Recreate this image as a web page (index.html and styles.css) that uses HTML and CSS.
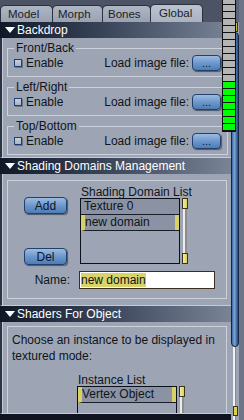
FILE: index.html
```html
<!DOCTYPE html>
<html lang="en">

<head>
    <meta charset="UTF-8">
    <meta name="viewport" content="width=device-width, initial-scale=1.0">
    <title>Global</title>
    <link rel="stylesheet" href="styles.css">
</head>

<body>
    <div class="app">
        <div class="main">
            <div class="tabs">
                <div class="tab model">Model</div>
                <div class="tab morph">Morph</div>
                <div class="tab bones">Bones</div>
                <div class="tab active">Global</div>
            </div>

            <div class="bar"><span class="tri"></span>Backdrop</div>
            <div class="panel backdrop">
                <fieldset class="group">
                    <legend>Front/Back</legend>
                    <div class="row">
                        <label class="check"><span class="box"></span>Enable</label>
                        <span class="load">Load image file:</span>
                        <button class="btn dots">...</button>
                    </div>
                </fieldset>
                <fieldset class="group">
                    <legend>Left/Right</legend>
                    <div class="row">
                        <label class="check"><span class="box"></span>Enable</label>
                        <span class="load">Load image file:</span>
                        <button class="btn dots">...</button>
                    </div>
                </fieldset>
                <fieldset class="group">
                    <legend>Top/Bottom</legend>
                    <div class="row">
                        <label class="check"><span class="box"></span>Enable</label>
                        <span class="load">Load image file:</span>
                        <button class="btn dots">...</button>
                    </div>
                </fieldset>
            </div>

            <div class="bar"><span class="tri"></span>Shading Domains Management</div>
            <div class="panel domains">
                <div class="frame">
                    <div class="domain-row">
                        <div class="actions">
                            <button class="btn big">Add</button>
                            <button class="btn big">Del</button>
                        </div>
                        <div class="list-col">
                            <div class="list-label">Shading Domain List</div>
                            <div class="list-wrap">
                                <div class="list tall">
                                    <div class="item">Texture 0</div>
                                    <div class="item sel">new domain</div>
                                </div>
                                <div class="mini-scroll tall">
                                    <span class="knob"></span>
                                    <span class="knob"></span>
                                </div>
                            </div>
                        </div>
                    </div>
                    <div class="name-row">
                        <span class="name-label">Name:</span>
                        <div class="name-input"><span class="hl">new domain</span></div>
                    </div>
                </div>
            </div>

            <div class="bar"><span class="tri"></span>Shaders For Object</div>
            <div class="panel shaders">
                <div class="frame">
                    <p class="hint">Choose an instance to be displayed in textured mode:</p>
                    <div class="list-col inst">
                        <div class="list-label">Instance List</div>
                        <div class="list-wrap">
                            <div class="list short">
                                <div class="item sel">Vertex Object</div>
                            </div>
                            <div class="mini-scroll short">
                                <span class="knob"></span>
                            </div>
                        </div>
                    </div>
                </div>
            </div>
            <div class="foot"></div>
        </div>

        <div class="vscroll">
            <div class="top-mark"></div>
            <div class="thumb"></div>
            <div class="track"><span class="end-mark"></span></div>
        </div>
        <div class="edge"></div>

        <div class="meter">
            <span></span><span></span><span></span><span></span><span></span><span></span>
            <span></span><span></span><span></span><span></span><span></span><span></span>
            <span class="on"></span><span class="on"></span><span class="on"></span><span class="on"></span>
            <span class="on"></span><span class="on"></span><span class="on"></span>
        </div>
    </div>
</body>

</html>
```

FILE: styles.css
```css
* {
    box-sizing: border-box;
}

body {
    margin: 0;
    background: #5c6577;
    font-family: "Liberation Sans", Arial, sans-serif;
    font-size: 12px;
    color: #101418;
}

.app {
    position: relative;
    display: flex;
    width: 244px;
    height: 420px;
    overflow: hidden;
}

.main {
    width: 231px;
    display: flex;
    flex-direction: column;
}

/* tabs */
.tabs {
    height: 22px;
    display: flex;
    align-items: flex-end;
    background: #4c5364;
}

.tab {
    height: 17px;
    margin-right: -1px;
    padding: 2px 0 0 5px;
    background: linear-gradient(#aeb5c3, #9aa2b2);
    border: 1px solid #2a3140;
    border-bottom: none;
    border-radius: 5px 5px 0 0;
    font-size: 11.5px;
    color: #1a1e26;
}

.tab.model {
    width: 53px;
    padding-left: 7px;
}

.tab.morph {
    width: 51px;
}

.tab.bones {
    width: 49px;
}

.tab.active {
    height: 18px;
    width: 53px;
    padding-left: 8px;
    background: linear-gradient(#bcc3cf, #aab2c0);
}

/* section title bars */
.bar {
    height: 16px;
    display: flex;
    align-items: center;
    padding-left: 5px;
    background: linear-gradient(to right, #101828, #3a4458 45%, #7a8497);
    color: #fff;
    font-size: 12px;
}

.tri {
    width: 0;
    height: 0;
    margin-right: 2px;
    border-left: 5px solid transparent;
    border-right: 5px solid transparent;
    border-top: 6px solid #fff;
}

.panel {
    background: #9da5b5;
    border-left: 2px solid #2c3444;
    border-bottom: 1px solid #c6ccd6;
    box-shadow: inset 1px 0 0 #c6ccd6;
}

/* backdrop */
.backdrop {
    padding: 4px 3px 2px 5px;
    display: flex;
    flex-direction: column;
    gap: 4px;
}

.group {
    margin: 0;
    height: 35px;
    padding: 0 6px;
    border: 1px solid #ccd2dc;
    min-width: 0;
}

.group legend {
    padding: 0 2px;
    line-height: 12px;
}

.row {
    display: flex;
    align-items: center;
    height: 18px;
}

.check {
    display: flex;
    align-items: center;
}

.box {
    width: 8px;
    height: 8px;
    margin-right: 4px;
    border: 1px solid #1f3f74;
    background: linear-gradient(#c6d0dc, #a9b5c6);
    box-shadow: 1px 1px 0 #6b7588;
}

.load {
    margin-left: auto;
    margin-right: 3px;
}

.btn {
    font-family: inherit;
    color: #0e1622;
    border: 1px solid #22406c;
    border-radius: 4px;
    background: linear-gradient(#9bbce2, #6e98cc 50%, #4e7cb6);
    box-shadow: 1px 1px 1px #4e5768;
    padding: 0;
}

.dots {
    width: 29px;
    height: 16px;
    font-size: 11px;
    line-height: 10px;
}

.big {
    width: 43px;
    height: 17px;
    font-size: 12px;
}

/* frames with light outline */
.frame {
    border: 1px solid #ccd2dc;
}

.domains {
    padding: 6px 4px 6px 5px;
}

.domain-row {
    display: flex;
    padding-top: 5px;
}

.actions {
    width: 72px;
    padding: 11px 0 0 16px;
    display: flex;
    flex-direction: column;
    gap: 34px;
}

.list-label {
    line-height: 12px;
    padding-left: 1px;
}

.list-wrap {
    display: flex;
    gap: 2px;
}

.list {
    width: 100px;
    border: 1px solid #0c1018;
    background: #9da5b5;
}

.list.tall {
    height: 66px;
}

.list.short {
    height: 30px;
}

.item {
    height: 16px;
    padding-left: 3px;
    line-height: 15px;
    background: #8a92a3;
    border-bottom: 1px solid #1a1e28;
}

.item.sel {
    border-left: 4px solid #d8d168;
    padding-left: 0;
    box-shadow: inset -4px 0 0 #d8d168;
}

.mini-scroll {
    width: 6px;
    display: flex;
    flex-direction: column;
    justify-content: space-between;
    background: linear-gradient(to right, #9da5b5 1px, #ececec 1px, #ececec 3px, #8c8c8c 3px, #8c8c8c 5px, #9da5b5 5px);
}

.mini-scroll.tall {
    height: 66px;
}

.mini-scroll.short {
    height: 30px;
    justify-content: flex-start;
}

.knob {
    height: 11px;
    width: 6px;
    border: 1px solid #3a3418;
    background: linear-gradient(to right, #f4eea0, #d8d060);
}

.name-row {
    display: flex;
    align-items: center;
    margin: 6px 0 9px;
}

.name-label {
    width: 62px;
    text-align: right;
    margin-right: 9px;
}

.name-input {
    width: 136px;
    height: 18px;
    border: 1px solid #3a2e1e;
    background: #fff;
    padding: 1px;
    line-height: 14px;
}

.hl {
    background: #d8d46a;
}

/* shaders */
.shaders {
    height: 92px;
    overflow: hidden;
    padding: 4px 4px 0 5px;
}

.shaders .frame {
    height: 100px;
    padding: 5px 4px;
}

.hint {
    margin: 0;
    line-height: 16px;
}

.inst {
    margin: 10px 0 0 65px;
}

.foot {
    flex: 1;
    background: #101420;
}

/* right side scroller */
.vscroll {
    width: 8px;
    margin-top: 22px;
    display: flex;
    flex-direction: column;
    background: #9da5b5;
}

.top-mark {
    height: 10px;
    margin-left: 4px;
    width: 3px;
    background: #c8b840;
    border: 1px solid #3a3418;
}

.thumb {
    height: 315px;
    border: 1px solid #16243e;
    border-radius: 4px;
    background: linear-gradient(to right, #3f6aa2, #7ea5d6 45%, #4a76b0 70%, #2a4a7c);
}

.track {
    flex: 1;
    display: flex;
    flex-direction: column;
    justify-content: flex-end;
    align-items: center;
    padding-bottom: 4px;
    background: linear-gradient(to right, #9da5b5 2px, #f2f2f2 2px, #f2f2f2 4px, #8a8a8a 4px, #8a8a8a 5px, #9da5b5 5px);
}

.end-mark {
    width: 5px;
    height: 10px;
    border: 1px solid #3a3418;
    background: #dcd24a;
}

.edge {
    flex: 1;
    background: #6d7689;
}

/* level meter over the corner */
.meter {
    position: absolute;
    left: 222px;
    top: -3px;
    width: 14px;
    display: grid;
    grid-template-rows: repeat(19, 7px);
    border: 1px solid #101010;
    background: #101010;
}

.meter span {
    background: #b4b4b4;
    border-bottom: 1px solid #101010;
}

.meter span.on {
    background: #00ff00;
}
```
